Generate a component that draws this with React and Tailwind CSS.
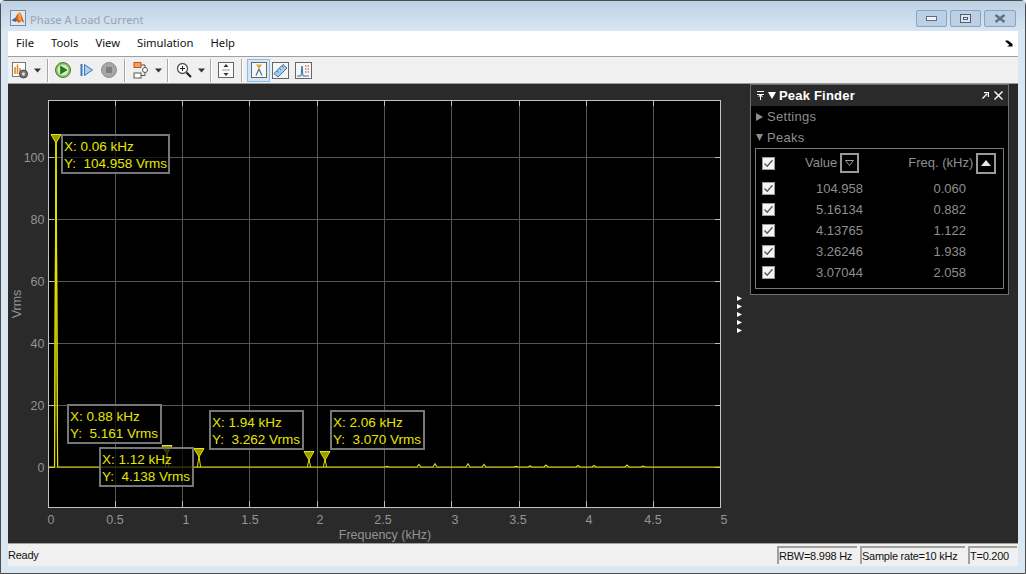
import React from "react";

const xs = [48.5, 115.5, 182.5, 249.5, 317.5, 384.5, 451.5, 519.5, 586.5, 653.5];
const xLabels = [["0", 51], ["0.5", 115], ["1", 186], ["1.5", 250], ["2", 320], ["2.5", 383], ["3", 455], ["3.5", 518], ["4", 589], ["4.5", 653], ["5", 724]];
const ys = [["100", 157.5], ["80", 219.5], ["60", 281.5], ["40", 343.5], ["20", 405.5], ["0", 467.5]];
const bumps = [[387, 0.6], [419, 2.5], [435, 3.2], [468, 3.2], [484, 2.5], [516, 0.6], [530, 1], [546, 2], [578, 1.5], [594, 1.5], [627, 2], [643, 0.8]];
const markers = [[56, 134, 467], [167, 445, 467], [199, 448, 467], [309, 451, 467], [325, 451, 467]];
const rows = [["104.958", "0.060"], ["5.16134", "0.882"], ["4.13765", "1.122"], ["3.26246", "1.938"], ["3.07044", "2.058"]];

function spectrumPath() {
  let d = "M49 467 L54.6 467 L56 134 L57.6 467 ";
  bumps.forEach(([x, h]) => {
    d += `L${x - 2} 467 L${x} ${467 - h} L${x + 2} 467 `;
  });
  return d + "L721 467";
}

function Plot() {
  return (
    <svg viewBox="8 84 730 459" className="block w-[730px] h-[459px]">
      <rect x="48.5" y="100.5" width="672" height="407" fill="#000" />
      {xs.slice(1).map((x) => (
        <line key={x} x1={x} x2={x} y1="100" y2="507" stroke="#565656" />
      ))}
      {ys.map(([l, y]) => (
        <line key={l} x1="48" x2="721" y1={y} y2={y} stroke="#565656" />
      ))}
      {xs.slice(1).map((x) => (
        <g key={x} stroke="#bdbdbd">
          <line x1={x} x2={x} y1="100" y2="106" />
          <line x1={x} x2={x} y1="501" y2="507" />
        </g>
      ))}
      {ys.map(([l, y]) => (
        <g key={l} stroke="#bdbdbd">
          <line x1="48" x2="54" y1={y} y2={y} />
          <line x1="715" x2="721" y1={y} y2={y} />
        </g>
      ))}
      <rect x="48.5" y="100.5" width="672" height="407" fill="none" stroke="#c4c4c4" />
      <path d={spectrumPath()} fill="none" stroke="#e0e000" strokeWidth="1.2" />
      {markers.map(([x, t, b]) => (
        <g key={x}>
          <path d={`M${x} ${t + 8} L${x - 1.6} ${b} M${x} ${t + 8} L${x + 1.6} ${b}`} stroke="#e0e000" strokeWidth="1" fill="none" />
          <path d={`M${x - 5} ${t + 0.5} H${x + 5} L${x} ${t + 9} Z`} fill="#9c9c00" stroke="#e6e600" strokeWidth="1" />
        </g>
      ))}
      <g fill="#949494" fontFamily="'Liberation Sans', sans-serif" fontSize="12.5">
        {xLabels.map(([l, x]) => (
          <text key={l} x={x} y="523.5" textAnchor="middle">{l}</text>
        ))}
        {ys.map(([l, y]) => (
          <text key={l} x="44.5" y={y + 4.5} textAnchor="end">{l}</text>
        ))}
        <text x="385" y="539" textAnchor="middle">Frequency (kHz)</text>
        <text transform="translate(21 304) rotate(-90)" textAnchor="middle">Vrms</text>
      </g>
    </svg>
  );
}

function Tip({ className, x, y }) {
  return (
    <div className={`absolute h-[40px] border-2 border-[#777777] bg-black/70 pl-[1px] pt-[2px] text-[13.5px] leading-[17px] text-[#e6e600] whitespace-pre ${className}`}>
      <div>{x}</div>
      <div>{y}</div>
    </div>
  );
}

function Caret() {
  return (
    <svg width="9" height="5" viewBox="0 0 9 5" className="block">
      <path d="M1 0.5H8L4.5 4.5Z" fill="#333" />
    </svg>
  );
}

function Sep() {
  return <div className="w-[2px] h-[23px] bg-[#a8a8a8] border-r border-white" />;
}

function Logo() {
  return (
    <svg width="16" height="16" viewBox="0 0 16 16" className="block">
      <rect x="0.5" y="0.5" width="15" height="15" fill="#dfe8f2" stroke="#7d8a99" />
      <path d="M1.5 10.5 L5 8 L8 3 L10.5 2.5 L14.5 13 L11.5 11 L8.5 13 L6 10 Z" fill="#d9661f" />
      <path d="M1.5 10.5 L5 8 L7 10 L6 12 Z" fill="#2d6ea8" />
      <path d="M8 3 L10.5 2.5 L11.5 11 L8.5 10 Z" fill="#f2a33a" />
    </svg>
  );
}

function Toolbar() {
  return (
    <div className="h-[28px] bg-[#f0f0f0] border-t border-b border-t-[#a0a0a0] border-b-[#9a9a9a] flex items-center pl-[4px]">
      <svg width="17" height="17" viewBox="0 0 17 17" className="block">
        <rect x="0.5" y="0.5" width="13" height="14" fill="#fff" stroke="#777" />
        <path d="M3 12V5M5.5 12V2.5M8 12V6" stroke="#e0882a" strokeWidth="1.6" />
        <circle cx="11.5" cy="12" r="4" fill="#777" stroke="#444" />
        <circle cx="11.5" cy="12" r="1.4" fill="#eee" />
      </svg>
      <div className="ml-[4px] mr-[5px]"><Caret /></div>
      <Sep />
      <svg width="16" height="16" viewBox="0 0 16 16" className="block ml-[6px]">
        <circle cx="8" cy="8" r="7.5" fill="#86c25a" stroke="#3f7f2c" />
        <circle cx="8" cy="8" r="5.5" fill="#d2ecc0" />
        <path d="M5.5 4L12 8L5.5 12Z" fill="#1f7a22" stroke="#14561a" strokeWidth="0.5" />
      </svg>
      <svg width="14" height="14" viewBox="0 0 14 14" className="block ml-[9px]">
        <path d="M1.5 1V13" stroke="#3c78b8" strokeWidth="2" />
        <path d="M4.5 1.5L12.5 7L4.5 12.5Z" fill="#a9cdee" stroke="#3c78b8" />
      </svg>
      <svg width="16" height="16" viewBox="0 0 16 16" className="block ml-[7px]">
        <circle cx="8" cy="8" r="7.5" fill="#a6a6a6" stroke="#8e8e8e" />
        <rect x="5" y="5" width="6" height="6" fill="#7e7e7e" />
      </svg>
      <div className="ml-[7px]"><Sep /></div>
      <svg width="16" height="17" viewBox="0 0 16 17" className="block ml-[7px]">
        <rect x="1" y="0.5" width="7" height="5" fill="#f2a25c" stroke="#c0561a" />
        <rect x="1" y="11" width="7" height="5" fill="#fff" stroke="#555" />
        <circle cx="12" cy="8" r="2.5" fill="#fff" stroke="#555" />
        <path d="M8 3H12V5.5M12 10.5V13.5H8" stroke="#555" fill="none" />
      </svg>
      <div className="ml-[5px] mr-[4px]"><Caret /></div>
      <Sep />
      <svg width="16" height="16" viewBox="0 0 16 16" className="block ml-[7px]">
        <circle cx="6.5" cy="6.5" r="5" fill="#fff" stroke="#555" strokeWidth="1.3" />
        <path d="M4 6.5H9M6.5 4V9" stroke="#222" strokeWidth="1.1" />
        <path d="M10.5 10.5L15 15" stroke="#222" strokeWidth="2.2" />
      </svg>
      <div className="ml-[5px] mr-[4px]"><Caret /></div>
      <Sep />
      <svg width="16" height="16" viewBox="0 0 16 16" className="block ml-[6px]">
        <rect x="0.5" y="0.5" width="15" height="15" fill="#fafafa" stroke="#666" />
        <path d="M8 2L10.5 5H5.5ZM8 14L10.5 11H5.5Z" fill="#333" />
        <path d="M4 8H12" stroke="#999" />
      </svg>
      <div className="ml-[7px]"><Sep /></div>
      <div className="ml-[4px] w-[23px] h-[23px] bg-[#d3e7f8] border border-[#8cbbe3] flex items-center justify-center">
        <svg width="16" height="16" viewBox="0 0 16 16" className="block">
          <rect x="0.5" y="0.5" width="15" height="15" fill="#f7f7f7" stroke="#666" />
          <path d="M5 2.5H11L8 7Z" fill="#e6a33c" />
          <path d="M8 7L5 13.5M8 7L11 13.5" stroke="#4d6f92" strokeWidth="1.2" />
        </svg>
      </div>
      <svg width="17" height="17" viewBox="0 0 17 17" className="block ml-[2px]">
        <rect x="0.5" y="0.5" width="16" height="16" fill="#f7f7f7" stroke="#666" />
        <path d="M2 11.5L11 2.5L15 6L6 15Z" fill="#a8cdea" stroke="#3d6f99" />
        <path d="M5 9L6.5 10.5M7.5 6.5L9 8M10 4L11.5 5.5" stroke="#3d6f99" />
      </svg>
      <svg width="17" height="17" viewBox="0 0 17 17" className="block ml-[6px]">
        <rect x="0.5" y="0.5" width="16" height="16" fill="#f7f7f7" stroke="#666" />
        <path d="M2 14H6L7 4L8 14H14" stroke="#3a6ea5" fill="none" />
        <path d="M10 4H15M10 7H15M10 10H15" stroke="#c0392b" strokeDasharray="1.5 1" />
      </svg>
    </div>
  );
}

function WinBtn({ children, className }) {
  return (
    <div className={`h-[17px] rounded-[2px] border border-[#8ea4bd] bg-[#bcd0e5] flex items-center justify-center ${className}`}>
      {children}
    </div>
  );
}

function Check() {
  return (
    <div className="w-[13px] h-[13px] bg-[#f4f4f4] border border-[#9a9a9a] flex items-center justify-center">
      <svg width="11" height="11" viewBox="0 0 11 11" className="block">
        <path d="M1.5 5.5L4.2 8.3L9.5 2.2" fill="none" stroke="#555" strokeWidth="1.3" />
      </svg>
    </div>
  );
}

function PeakFinder() {
  return (
    <div className="w-[259px] h-[211px] border border-[#6e6e6e] bg-black flex flex-col font-['Liberation_Sans',sans-serif] text-[#8e8e8e] text-[13px]">
      <div className="h-[21px] bg-[#2a2a2a] flex items-center pl-[6px] pr-[4px] text-white">
        <svg width="7" height="9" viewBox="0 0 7 9" className="block">
          <path d="M0 0.5H7M0 3.5H7M3.5 3.5V9M1.5 6L3.5 3.5L5.5 6" stroke="#fff" fill="none" />
        </svg>
        <svg width="8" height="7" viewBox="0 0 8 7" className="block ml-[4px]">
          <path d="M0 0H8L4 7Z" fill="#fff" />
        </svg>
        <span className="ml-[3px] font-bold text-[13px] tracking-[0.2px]">Peak Finder</span>
        <svg width="7" height="7" viewBox="0 0 7 7" className="block ml-auto">
          <path d="M0.5 6.5L5 2M2 0.5H6.5V5" stroke="#fff" strokeWidth="1.4" fill="none" />
        </svg>
        <svg width="9" height="9" viewBox="0 0 9 9" className="block ml-[5px] mr-[1px]">
          <path d="M0.5 0.5L8.5 8.5M8.5 0.5L0.5 8.5" stroke="#fff" strokeWidth="1.4" />
        </svg>
      </div>
      <div className="h-[21px] flex items-center pl-[5px] tracking-[0.3px]">
        <svg width="7" height="8" viewBox="0 0 7 8" className="block mr-[4px]"><path d="M0 0L7 4L0 8Z" fill="#8e8e8e" /></svg>
        Settings
      </div>
      <div className="h-[21px] flex items-center pl-[5px] tracking-[0.3px]">
        <svg width="7" height="7" viewBox="0 0 7 7" className="block mr-[4px]"><path d="M0 0H7L3.5 7Z" fill="#8e8e8e" /></svg>
        Peaks
      </div>
      <div className="mx-[4px] h-[141px] border border-[#777777]">
        <div className="h-[28px] flex items-center pl-[6px]">
          <Check />
          <span className="ml-[30px]">Value</span>
          <div className="ml-[3px] w-[19px] h-[20px] border-2 border-[#9a9a9a] flex items-center justify-center">
            <svg width="9" height="6" viewBox="0 0 9 6" className="block"><path d="M0.5 0.5H8.5L4.5 5.5Z" fill="none" stroke="#9a9a9a" /></svg>
          </div>
          <span className="ml-[49px]">Freq. (kHz)</span>
          <div className="ml-[3px] w-[20px] h-[21px] border-2 border-[#9a9a9a] flex items-center justify-center">
            <svg width="10" height="6" viewBox="0 0 10 6" className="block"><path d="M0 6H10L5 0Z" fill="#e8e8e8" /></svg>
          </div>
        </div>
        <div className="pt-[1px]">
          {rows.map(([v, f]) => (
            <div key={v} className="h-[21px] flex items-center pl-[6px]">
              <Check />
              <span className="w-[88px] text-right">{v}</span>
              <span className="w-[103px] text-right">{f}</span>
            </div>
          ))}
        </div>
      </div>
    </div>
  );
}

function Cell({ className, children }) {
  return (
    <div className={`h-[18px] bg-[#f0f0f0] border-l-2 border-t-2 border-[#a0a0a0] flex items-center whitespace-nowrap ${className}`}>
      {children}
    </div>
  );
}

export default function App() {
  return (
    <div className="w-[1026px] h-[574px] overflow-hidden bg-[#e9eef4]">
      <div className="w-full h-full rounded-t-[5px] border border-[#4d4d4d] bg-[#dae6f2] flex flex-col">
        <div className="h-[30px] shrink-0 bg-gradient-to-b from-[#bcd0e4] to-[#d9e6f3] flex pl-[9px] pr-[9px] pt-[9px] font-['Noto_Sans',sans-serif]">
          <Logo />
          <span className="ml-[4px] text-[11.2px] leading-[20px] text-[#9aa3ad]">Phase A Load Current</span>
          <div className="ml-auto flex gap-[3px]">
            <WinBtn className="w-[31px]"><div className="w-[11px] h-[5px] bg-[#eef3f8] border border-[#5f6f80]" /></WinBtn>
            <WinBtn className="w-[31px]"><div className="w-[11px] h-[9px] bg-[#dce6f0] border border-[#4f5f70] flex items-center justify-center"><div className="w-[5px] h-[3px] bg-[#eef3f8] border border-[#4f5f70]" /></div></WinBtn>
            <WinBtn className="w-[32px]">
              <svg width="12" height="9" viewBox="0 0 12 9" className="block"><path d="M1.5 1L10.5 8M10.5 1L1.5 8" stroke="#5f6f80" strokeWidth="2.4" /></svg>
            </WinBtn>
          </div>
        </div>
        <div className="mx-[7px] flex-1 flex flex-col">
          <div className="h-[25px] bg-white flex items-center pl-[8px] gap-[17px] text-[11.25px] text-[#111] font-['Noto_Sans',sans-serif] pr-[5px]">
            <span>File</span>
            <span>Tools</span>
            <span>View</span>
            <span>Simulation</span>
            <span>Help</span>
            <svg width="8" height="7" viewBox="0 0 8 7" className="block ml-auto">
              <path d="M0.5 0.5H3L7.5 4V6.5H2L4.5 5L0.5 1.5Z" fill="#000" />
            </svg>
          </div>
          <Toolbar />
          <div className="h-[459px] bg-[#2a2a2a] flex font-['Liberation_Sans',sans-serif]">
            <div className="relative w-[730px] shrink-0">
              <Plot />
              <Tip className="left-[53px] top-[50px] w-[109px]" x="X: 0.06 kHz" y="Y:  104.958 Vrms" />
              <Tip className="left-[59px] top-[320px] w-[95px]" x="X: 0.88 kHz" y="Y:  5.161 Vrms" />
              <Tip className="left-[91px] top-[363px] w-[95px]" x="X: 1.12 kHz" y="Y:  4.138 Vrms" />
              <Tip className="left-[201px] top-[326px] w-[95px]" x="X: 1.94 kHz" y="Y:  3.262 Vrms" />
              <Tip className="left-[322px] top-[326px] w-[95px]" x="X: 2.06 kHz" y="Y:  3.070 Vrms" />
            </div>
            <div className="w-[12px] shrink-0 flex flex-col items-start gap-[3px] pt-[212px] -ml-[1px] mr-[1px]">
              {[0, 1, 2, 3, 4].map((i) => (
                <svg key={i} width="5" height="5" viewBox="0 0 5 5" className="block">
                  <path d="M0 0L5 2.5L0 5Z" fill="#fff" />
                </svg>
              ))}
            </div>
            <PeakFinder />
          </div>
          <div className="h-[23px] bg-[#f0f0f0] border-t border-[#a0a0a0] flex items-center text-[11px] tracking-[-0.25px] text-[#111] font-['Liberation_Sans',sans-serif]">
            <span>Ready</span>
            <div className="ml-auto flex gap-[3px] pr-[1px]">
              <Cell className="w-[80px]">RBW=8.998 Hz</Cell>
              <Cell className="w-[105px]">Sample rate=10 kHz</Cell>
              <Cell className="w-[49px]">T=0.200</Cell>
            </div>
          </div>
        </div>
        <div className="h-[7px] shrink-0" />
      </div>
    </div>
  );
}
